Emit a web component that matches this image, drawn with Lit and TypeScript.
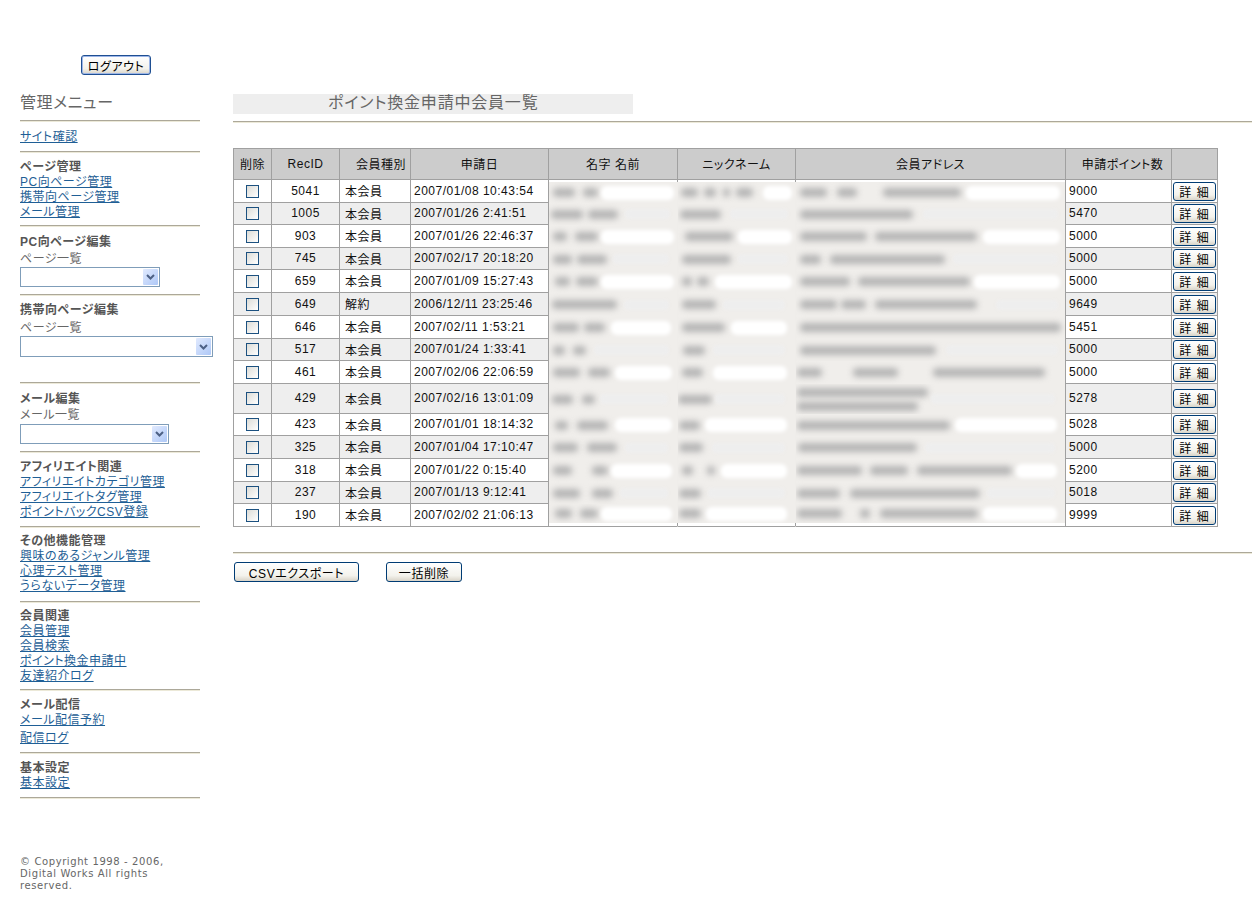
import { LitElement, html, css, nothing } from "lit";
import { customElement } from "lit/decorators.js";

type Span = [number, number];
interface Smear { lines: Span[][]; bar?: Span; }
interface Row {
  h: number; id: string; kind: string; date: string; pts: string;
  name: Smear; nick: Smear; addr: Smear;
}
const s = (bar: Span | null, ...spans: Span[]): Smear => ({ lines: [spans], bar: bar ?? undefined });

const rows: Row[] = [
  { h: 23, id: "5041", kind: "本会員", date: "2007/01/08 10:43:54", pts: "9000", name: s([54, 123], [4, 26], [34, 49]), nick: s([87, 112], [3, 20], [26, 38], [45, 52], [58, 75]), addr: s([172, 262], [4, 31], [41, 61], [87, 165]) },
  { h: 22, id: "1005", kind: "本会員", date: "2007/01/26 2:41:51", pts: "5470", name: s([76, 121], [2, 34], [39, 69]), nick: s([52, 110], [2, 43]), addr: s([127, 262], [4, 117]) },
  { h: 23, id: "903", kind: "本会員", date: "2007/01/26 22:46:37", pts: "5000", name: s([54, 123], [4, 18], [26, 49]), nick: s([62, 112], [7, 55]), addr: s([189, 262], [4, 71], [79, 181]) },
  { h: 22, id: "745", kind: "本会員", date: "2007/02/17 20:18:20", pts: "5000", name: s([64, 120], [4, 23], [28, 58]), nick: s([60, 110], [4, 53]), addr: s([157, 262], [4, 25], [34, 149]) },
  { h: 23, id: "659", kind: "本会員", date: "2007/01/09 15:27:43", pts: "5000", name: s([54, 123], [6, 21], [27, 49]), nick: s([39, 112], [4, 14], [19, 31]), addr: s([180, 262], [4, 54], [62, 174]) },
  { h: 23, id: "649", kind: "解約", date: "2006/12/11 23:25:46", pts: "9649", name: s([75, 120], [3, 68]), nick: s([45, 107], [4, 38]), addr: s([200, 262], [4, 41], [45, 70], [79, 181]) },
  { h: 23, id: "646", kind: "本会員", date: "2007/02/11 1:53:21", pts: "5451", name: s([64, 120], [4, 30], [35, 56]), nick: s([55, 107], [4, 47]), addr: s(null, [4, 265]) },
  { h: 22, id: "517", kind: "本会員", date: "2007/01/24 1:33:41", pts: "5000", name: s([45, 120], [4, 16], [24, 37]), nick: s([35, 107], [5, 27]), addr: s([150, 262], [4, 140]) },
  { h: 23, id: "461", kind: "本会員", date: "2007/02/06 22:06:59", pts: "5000", name: s([68, 121], [4, 31], [39, 61]), nick: s([37, 107], [4, 25]), addr: s(null, [1, 26], [57, 102], [137, 249]) },
  { h: 30, id: "429", kind: "本会員", date: "2007/02/16 13:01:09", pts: "5278", name: s([51, 119], [3, 24], [33, 46]), nick: s([37, 107], [0, 34]), addr: { lines: [[[1, 132]], [[1, 122]]], bar: [135, 259] } },
  { h: 22, id: "423", kind: "本会員", date: "2007/01/01 18:14:32", pts: "5028", name: s([68, 121], [6, 19], [28, 59]), nick: s([29, 107], [1, 22]), addr: s([161, 259], [1, 154]) },
  { h: 23, id: "325", kind: "本会員", date: "2007/01/04 17:10:47", pts: "5000", name: s([76, 119], [4, 29], [38, 68]), nick: s([34, 107], [1, 25]), addr: s([129, 259], [2, 121]) },
  { h: 23, id: "318", kind: "本会員", date: "2007/01/22 0:15:40", pts: "5200", name: s([64, 121], [4, 23], [43, 59]), nick: s([45, 107], [4, 15], [29, 37]), addr: s([222, 259], [1, 66], [74, 112], [121, 216]) },
  { h: 22, id: "237", kind: "本会員", date: "2007/01/13 9:12:41", pts: "5018", name: s([71, 119], [4, 31], [43, 64]), nick: s([30, 107], [1, 23]), addr: s([191, 259], [1, 44], [54, 184]) },
  { h: 23, id: "190", kind: "本会員", date: "2007/02/02 21:06:13", pts: "9999", name: s([54, 121], [6, 23], [31, 49]), nick: s([30, 107], [1, 23]), addr: s([189, 259], [1, 46], [64, 74], [84, 182]) },
];

const colWidths = [38, 68, 71, 138, 129, 118, 270, 106, 46];

@customElement("app-root")
export class AppRoot extends LitElement {
  static styles = css`
    :host {
      display: block;
      font-family: "Liberation Sans", "Noto Sans CJK JP", sans-serif;
      font-size: 12px;
      letter-spacing: 0.5px;
      font-feature-settings: "palt";
      color: #111;
    }
    .page { display: flex; align-items: flex-start; min-height: 904px; }
    .side { flex: none; width: 213px; padding-left: 20px; }
    .rule { height: 1px; background: #aca899; border-bottom: 1px solid #ece9d8; }
    .w180 { width: 180px; }
    .btn {
      display: flex; align-items: center; justify-content: center;
      box-sizing: border-box; height: 20px;
      border: 1px solid #003c74; border-radius: 3px;
      background: linear-gradient(#fff, #f3f2ec 70%, #d9d4c8);
      color: #000; font: inherit; letter-spacing: 0.6px; padding: 0;
    }
    .logout {
      margin: 55px 0 0 61px; width: 70px; border-color: #1f4f92;
      box-shadow: inset 0 0 0 1px #9db6e8;
    }
    .menu-title {
      margin: 19px 0 8px; font-size: 16px; line-height: 18px; font-weight: 400;
      color: #666; letter-spacing: 0.6px;
    }
    .sec { width: 180px; line-height: 15px; }
    .sec a { display: block; color: #1f5f96; text-decoration: underline; width: max-content; }
    .sec b { display: block; color: #555; font-weight: 700; }
    .lab { display: block; color: #666; }
    .s1 { padding: 8px 0 6px; }
    .s2 { padding: 7px 0 5px; }
    .s3 { padding: 8px 0 7px; }
    .s3 .lab { margin-top: 2px; }
    .s4 { padding: 7px 0 25px; }
    .s4 .lab { margin-top: 3px; }
    .s5 { padding: 8px 0 7px; }
    .s5 .lab { margin-top: 1px; margin-bottom: 1px; }
    .s6 { padding: 7px 0 6px; }
    .s7 { padding: 6px 0 7px; }
    .s8 { padding: 6px 0 5px; }
    .s9 { padding: 7px 0 6px; }
    .s9 a + a { margin-top: 3px; }
    .s10 { padding: 7px 0 6px; }
    .select {
      box-sizing: border-box; height: 20px; display: flex; justify-content: flex-end; align-items: stretch;
      border: 1px solid #7f9db9; background: #fff; padding: 1px;
    }
    .select.t { height: 21px; }
    .w140 { width: 140px; }
    .w193 { width: 193px; }
    .w149 { width: 149px; }
    .arrow {
      width: 15px; display: flex; align-items: center; justify-content: center;
      background: linear-gradient(135deg, #e1eafe, #aec8f7); border-radius: 1px;
    }
    .copy {
      margin-top: 57px; width: 155px; color: #666;
      font: 10px/12px "DejaVu Sans", sans-serif; letter-spacing: 0.6px;
    }
    .main { flex: 1; min-width: 0; padding-top: 94px; }
    .band {
      box-sizing: border-box; width: 400px; height: 20px; padding-left: 95px;
      background: #eee; color: #666; font-size: 16px; line-height: 18px; letter-spacing: 0.8px;
    }
    .rule.top { margin-top: 7px; }
    table {
      margin-top: 25px; width: 985px; table-layout: fixed; border-collapse: separate; border-spacing: 0;
      border-top: 1px solid #a0a0a0; border-left: 1px solid #a0a0a0;
    }
    th, td {
      box-sizing: border-box; padding: 0 0 1px; border-right: 1px solid #a0a0a0; border-bottom: 1px solid #a0a0a0;
      font-weight: 400; overflow: visible;
    }
    th { height: 31px; background: #ccc; text-align: center; }
    th.kind { text-align: right; padding-right: 4px; }
    th.pts { padding-left: 8px; }
    tbody tr:nth-child(even) td { background: #eee; }
    tbody td.ctl { padding: 0; }
    .c { text-align: center; }
    .kind { padding-left: 5px; }
    .date { padding-left: 3px; }
    .num { padding-left: 3px; }
    .check {
      display: block; box-sizing: border-box; width: 13px; height: 13px; margin: 0 auto 0 12px;
      border: 1px solid #1c5180; background: linear-gradient(135deg, #dcdcd7, #fff);
    }
    .mini { width: 43px; height: 19px; margin-left: 1px; letter-spacing: 1px; }
    tbody td.blur {
      position: relative; padding: 0; border-bottom: 0; border-right-color: #efedea;
      background: #fff; vertical-align: top;
    }
    tbody tr:nth-child(even) td.blur { background: #fff; }
    tbody td.blur.last { border-right-color: #a0a0a0; }
    .smear {
      display: flex; align-items: center; background: #f0eeeb; overflow: hidden;
    }
    .lines { flex: none; display: flex; flex-direction: column; gap: 5px; }
    .line { display: flex; }
    .blob { flex: none; height: 9px; background: #b4b4b4; border-radius: 4px; filter: blur(3px); }
    .bar { flex: none; height: 10px; background: #eee; border-radius: 4px; filter: blur(1.5px); }
    .odd .bar { background: #fff; box-shadow: 0 0 3px 2px #fff; }
    tr:first-child .smear { margin-top: 2px; }
    .tick::after {
      content: ""; position: absolute; right: -1px; width: 1px; background: #a0a0a0;
    }
    tr:first-child .tick::after { top: 0; height: 2px; }
    tr:last-child .tick::after { bottom: 0; height: 3px; }
    tr:last-child td.blur { border-bottom: 1px solid #a0a0a0; }
    .rule.bottom { margin-top: 25px; }
    .actions { display: flex; gap: 27px; margin: 8px 0 0 1px; }
    .csv { width: 125px; }
    .bulk { width: 76px; }
  `;

  private chevron() {
    return html`<span class="arrow"><svg width="9" height="6" viewBox="0 0 9 6"><path d="M1 1l3.5 3.5L8 1" fill="none" stroke="#4d6185" stroke-width="2"/></svg></span>`;
  }

  private select(cls: string) {
    return html`<div class="select ${cls}">${this.chevron()}</div>`;
  }

  private blobs(spans: Span[]) {
    let end = 0;
    return html`<div class="line">${spans.map(([a, b]) => {
      const t = html`<span class="blob" style="margin-left:${a - end}px;width:${b - a}px"></span>`;
      end = b;
      return t;
    })}</div>`;
  }

  private smear(c: Smear, h: number, cls: string) {
    const lw = c.bar ? c.bar[0] : undefined;
    return html`<td class="blur ${cls}"><div class="smear" style="height:${h}px">
      <div class="lines" style=${lw !== undefined ? `width:${lw}px` : ""}>${c.lines.map((l) => this.blobs(l))}</div>
      ${c.bar ? html`<span class="bar" style="width:${c.bar[1] - c.bar[0]}px"></span>` : nothing}
    </div></td>`;
  }

  private renderRow(r: Row, i: number) {
    const last = i === rows.length - 1;
    const sh = i === 0 ? r.h - 2 : last ? r.h - 4 : r.h;
    return html`<tr class=${i % 2 === 0 ? "odd" : ""} style="height:${r.h}px">
      <td class="ctl"><span class="check"></span></td>
      <td class="c">${r.id}</td>
      <td class="kind">${r.kind}</td>
      <td class="date">${r.date}</td>
      ${this.smear(r.name, sh, "tick")}
      ${this.smear(r.nick, sh, "tick")}
      ${this.smear(r.addr, sh, "last")}
      <td class="num">${r.pts}</td>
      <td class="ctl"><button class="btn mini">詳 細</button></td>
    </tr>`;
  }

  render() {
    return html`<div class="page">
      <aside class="side">
        <button class="btn logout">ログアウト</button>
        <h2 class="menu-title">管理メニュー</h2>
        <div class="rule w180"></div>
        <div class="sec s1"><a href="#">サイト確認</a></div>
        <div class="rule w180"></div>
        <div class="sec s2"><b>ページ管理</b><a href="#">PC向ページ管理</a><a href="#">携帯向ページ管理</a><a href="#">メール管理</a></div>
        <div class="rule w180"></div>
        <div class="sec s3"><b>PC向ページ編集</b><span class="lab">ページ一覧</span>${this.select("w140")}</div>
        <div class="rule w180"></div>
        <div class="sec s4"><b>携帯向ページ編集</b><span class="lab">ページ一覧</span>${this.select("w193 t")}</div>
        <div class="rule w180"></div>
        <div class="sec s5"><b>メール編集</b><span class="lab">メール一覧</span>${this.select("w149")}</div>
        <div class="rule w180"></div>
        <div class="sec s6"><b>アフィリエイト関連</b><a href="#">アフィリエイトカテゴリ管理</a><a href="#">アフィリエイトタグ管理</a><a href="#">ポイントバックCSV登録</a></div>
        <div class="rule w180"></div>
        <div class="sec s7"><b>その他機能管理</b><a href="#">興味のあるジャンル管理</a><a href="#">心理テスト管理</a><a href="#">うらないデータ管理</a></div>
        <div class="rule w180"></div>
        <div class="sec s8"><b>会員関連</b><a href="#">会員管理</a><a href="#">会員検索</a><a href="#">ポイント換金申請中</a><a href="#">友達紹介ログ</a></div>
        <div class="rule w180"></div>
        <div class="sec s9"><b>メール配信</b><a href="#">メール配信予約</a><a href="#">配信ログ</a></div>
        <div class="rule w180"></div>
        <div class="sec s10"><b>基本設定</b><a href="#">基本設定</a></div>
        <div class="rule w180"></div>
        <div class="copy">© Copyright 1998 - 2006, Digital Works All rights reserved.</div>
      </aside>
      <main class="main">
        <div class="band">ポイント換金申請中会員一覧</div>
        <div class="rule top"></div>
        <table>
          <colgroup>${colWidths.map((w) => html`<col style="width:${w}px" />`)}</colgroup>
          <thead><tr>
            <th>削除</th><th>RecID</th><th class="kind">会員種別</th><th>申請日</th><th>名字 名前</th>
            <th>ニックネーム</th><th>会員アドレス</th><th class="pts">申請ポイント数</th><th></th>
          </tr></thead>
          <tbody>${rows.map((r, i) => this.renderRow(r, i))}</tbody>
        </table>
        <div class="rule bottom"></div>
        <div class="actions">
          <button class="btn csv">CSVエクスポート</button>
          <button class="btn bulk">一括削除</button>
        </div>
      </main>
    </div>`;
  }
}
